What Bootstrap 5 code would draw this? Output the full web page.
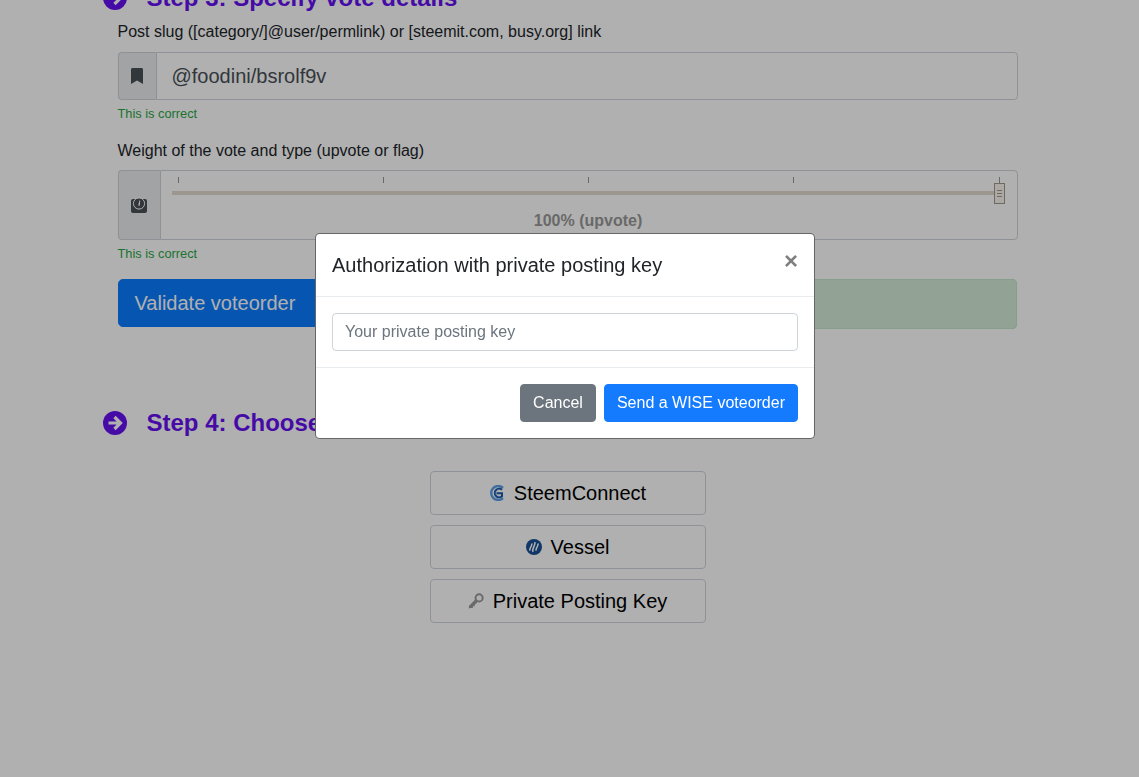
<!DOCTYPE html>
<html lang="en">
<head>
<meta charset="utf-8">
<title>WISE voteorder</title>
<link href="https://cdn.jsdelivr.net/npm/bootstrap@5.3.0/dist/css/bootstrap.min.css" rel="stylesheet">
<style>
html, body { height: 100%; overflow: hidden; }
body { font-family: "Liberation Sans", Arial, sans-serif; font-size: 16px; color: #212529; background: #fff; }
.page-wrap { width: 960px; margin-left: 87.5px; margin-top: -20px; padding: 0 15px; }
.step-heading { height: 36px; gap: 20px; color: #6610f2; font-size: 24px; font-weight: 700; margin: 0 0 4px; line-height: 36px; }
.step-heading svg { width: 24px; height: 24px; flex: none; }
.form-area { margin: 0 15px; }
.field-label { display: block; margin-bottom: 8px; line-height: 24px; }
.field-group { margin-bottom: 16px; }
.last-group .field-label { margin-bottom: 7px; }
.group-addon { width: 38px; flex: none; background: #e9ecef; border: 1px solid #ced4da; border-right: 0; border-radius: 4px 0 0 4px; }
.group-addon svg { width: 16px; height: 16px; fill: #495057; }
.wide-addon { width: 42px; height: 70px; }
.slug-input.form-control { height: 48px; font-size: 20px; color: #495057; padding: 8px 16px 8px 15px; border: 1px solid #ced4da; border-radius: 0 4px 4px 0; }
.ok-note { font-size: 12.8px; line-height: 19.2px; margin-top: 4px; color: #28a745; }
.slider-box { height: 70px; border: 1px solid #ced4da; border-radius: 0 4px 4px 0; padding: 6px 12px 0 11px; position: relative; }
.tick-row { height: 6px; padding: 0 5px 0 6px; }
.tick-mark { width: 1px; height: 6px; background: #999; }
.slide-track { height: 4px; margin: 8px 6px 0 0; background: #e1dbcf; }
.slide-handle { position: absolute; right: 12px; top: 12px; width: 11px; height: 21px; background: #f9f5ee; border: 1px solid #a09a8e; display: flex; flex-direction: column; align-items: center; justify-content: center; gap: 2px; }
.slide-handle i { display: block; width: 5px; height: 1px; background: #a09a8e; }
.slide-value { font-weight: 700; color: #999; text-align: center; margin-top: 14px; line-height: 24px; }
.validate-btn.btn { --bs-btn-bg: #0a7bff; --bs-btn-border-color: #0a7bff; width: 214px; height: 48px; font-size: 20px; padding: 8px 16px; border-radius: 4.8px; white-space: nowrap; flex: none; text-align: left; }
.result-box { height: 50px; margin-right: 1px; background: #d4edda; border: 1px solid #c3e6cb; border-radius: 4px; }
.second-step { margin-top: 76px; margin-bottom: 0; }
.method-list { width: 276px; margin: 30px auto 0; gap: 10px; }
.method-btn.btn { height: 44px; font-size: 20px; line-height: 30px; padding: 6px 12px; border-radius: 4px; background: #fff; color: #000; border: 1px solid #ced4da; display: flex; align-items: center; justify-content: center; gap: 9px; }
.method-btn svg { width: 16px; height: 16px; flex: none; }
.modal-backdrop { --bs-backdrop-opacity: .31; }
.auth-modal { padding-right: 9px; overflow: hidden; }
.auth-modal .modal-dialog { margin: 233px auto 0; max-width: 500px; }
.auth-modal .modal-content { border-radius: 4.8px; border: 1px solid rgba(0,0,0,.6); background-clip: border-box; }
.auth-modal .modal-header { padding: 16px; border-bottom: 1px solid #e9ecef; align-items: flex-start; }
.auth-modal .modal-title { font-size: 20px; line-height: 30px; font-weight: 400; margin: 0; }
.auth-modal .modal-body { padding: 16px; }
.auth-modal .modal-footer { padding: 16px; border-top: 1px solid #e9ecef; gap: 8px; }
.auth-modal .modal-footer > * { margin: 0; }
.dismiss-x { background: none; border: 0; font-size: 24px; font-weight: 700; line-height: 24px; color: #000; opacity: .5; padding: 15px 16px 17px; margin: -16px -16px -16px auto; }
.key-input.form-control { height: 38px; font-size: 16px; padding: 6px 12px; border: 1px solid #ced4da; border-radius: 4px; }
.key-input.form-control::placeholder { color: #6c757d; }
.auth-modal .btn { font-size: 16px; line-height: 24px; padding: 6px 12px; border-radius: 4px; }
.auth-modal .btn-primary { --bs-btn-bg: #147bff; --bs-btn-border-color: #147bff; }
</style>
</head>
<body>
<div class="page-wrap">
  <h3 class="step-heading d-flex align-items-center">
    <svg viewBox="0 0 24 24"><circle cx="12" cy="12" r="12" fill="#6610f2"/><path d="M5.500 12h12M11.500 6l6 6-6 6" fill="none" stroke="#fff" stroke-width="3.200"/></svg>
    <span>Step 3: Specify vote details</span>
  </h3>
  <div class="form-area">
    <div class="field-group">
      <label class="field-label">Post slug ([category/]@user/permlink) or [steemit.com, busy.org] link</label>
      <div class="d-flex">
        <span class="group-addon d-flex align-items-center justify-content-center">
          <svg viewBox="0 0 16 16"><path d="M2 1.500C2 .7 2.600 0 3.500 0h9c.9 0 1.500.7 1.500 1.500V16L8 12.500 2 16z"/></svg>
        </span>
        <input class="form-control slug-input" type="text" value="@foodini/bsrolf9v">
      </div>
      <div class="ok-note">This is correct</div>
    </div>
    <div class="field-group last-group">
      <label class="field-label">Weight of the vote and type (upvote or flag)</label>
      <div class="d-flex">
        <span class="group-addon wide-addon d-flex align-items-center justify-content-center">
          <svg viewBox="0 0 16 16"><rect x="0" y="2" width="16" height="14" rx="2"/><circle cx="8" cy="6.500" r="5.600" fill="#495057" stroke="#fff" stroke-width="1"/><path d="M7.200 8.500 8.400 3.500h.8L8.800 8.800z" fill="#fff"/></svg>
        </span>
        <div class="slider-box flex-fill">
          <div class="tick-row d-flex justify-content-between">
            <span class="tick-mark"></span><span class="tick-mark"></span><span class="tick-mark"></span><span class="tick-mark"></span><span class="tick-mark"></span>
          </div>
          <div class="slide-track"></div>
          <span class="slide-handle"><i></i><i></i><i></i></span>
          <div class="slide-value">100% (upvote)</div>
        </div>
      </div>
      <div class="ok-note">This is correct</div>
    </div>
    <div class="d-flex gap-3 align-items-start">
      <button class="btn btn-primary validate-btn" type="button">Validate voteorder</button>
      <div class="result-box flex-fill"></div>
    </div>
  </div>
  <h3 class="step-heading second-step d-flex align-items-center">
    <svg viewBox="0 0 24 24"><circle cx="12" cy="12" r="12" fill="#6610f2"/><path d="M5.500 12h12M11.500 6l6 6-6 6" fill="none" stroke="#fff" stroke-width="3.200"/></svg>
    <span>Step 4: Choose your authorization method</span>
  </h3>
  <div class="method-list d-flex flex-column">
    <button class="btn method-btn" type="button">
      <svg viewBox="0 0 16 16"><path d="M14 2.900A7 7 0 1 0 14 13.100" fill="none" stroke="#5f9fe8" stroke-width="2.400"/><path d="M13 4.800A4.300 4.300 0 1 0 13 11.200V8.200H7.500" fill="none" stroke="#1c5cb0" stroke-width="2"/></svg>
      <span>SteemConnect</span>
    </button>
    <button class="btn method-btn" type="button">
      <svg viewBox="0 0 18 18"><circle cx="9" cy="9" r="9" fill="#1a5099"/><path d="M4.500 13C3 10 7.500 9 6.500 5M8 14.500C6 10.500 11 8 10 3.500M11.500 13C10 10 14.500 9 13.500 5" fill="none" stroke="#fff" stroke-width="1.800"/></svg>
      <span>Vessel</span>
    </button>
    <button class="btn method-btn" type="button">
      <svg viewBox="0 0 18 18"><circle cx="12.500" cy="5.500" r="4" fill="none" stroke="#9a9a9a" stroke-width="2.200"/><path d="M9 6.500 11.500 9.500 7.500 13.500V15H5.500V17H3L1 17.500V14.500z" fill="#9a9a9a"/></svg>
      <span>Private Posting Key</span>
    </button>
  </div>
</div>

<div class="modal-backdrop show"></div>
<div class="modal d-block auth-modal" tabindex="-1">
  <div class="modal-dialog">
    <div class="modal-content">
      <div class="modal-header">
        <h5 class="modal-title">Authorization with private posting key</h5>
        <button class="dismiss-x" type="button" aria-label="Close">×</button>
      </div>
      <div class="modal-body">
        <input class="form-control key-input" type="text" placeholder="Your private posting key">
      </div>
      <div class="modal-footer">
        <button class="btn btn-secondary" type="button">Cancel</button>
        <button class="btn btn-primary" type="button">Send a WISE voteorder</button>
      </div>
    </div>
  </div>
</div>
<script src="https://cdn.jsdelivr.net/npm/bootstrap@5.3.0/dist/js/bootstrap.bundle.min.js"></script>
</body>
</html>
